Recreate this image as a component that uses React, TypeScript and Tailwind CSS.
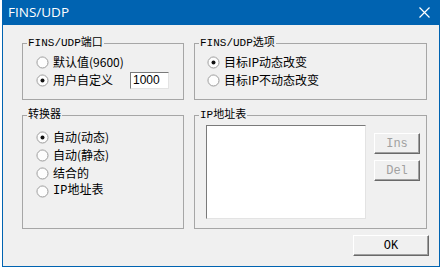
import type { ReactNode } from "react";

const cjk = "font-['Noto_Sans_CJK_SC',sans-serif]";
const mono = "font-['Liberation_Mono','Noto_Sans_CJK_SC',monospace]";

function Radio({ checked }: { checked?: boolean }) {
  return (
    <svg width="13" height="13" viewBox="0 0 13 13" className="shrink-0">
      <circle cx="6.5" cy="6.5" r="5.5" fill="#fdfdfd" stroke="#9a9a9a" />
      <path d="M2.6 9.8 A5 5 0 0 1 9.8 2.6" fill="none" stroke="#c8c8c8" />
      {checked ? <circle cx="6.5" cy="6.5" r="2" fill="#111" /> : null}
    </svg>
  );
}

function Option({ label, checked, className }: { label: ReactNode; checked?: boolean; className?: string }) {
  return (
    <div className="flex h-[18px] items-center gap-[4px]">
      <Radio checked={checked} />
      <span className={`text-[12px] leading-none text-black ${className ?? cjk}`}>{label}</span>
    </div>
  );
}

function Group({ title, className, children }: { title: string; className?: string; children: ReactNode }) {
  return (
    <div className={`relative border border-[#a6a6a6] ${className ?? ""}`}>
      <div className={`absolute left-[4px] top-[-8px] bg-[#f0f0f0] px-[1px] text-[11px] leading-[14px] text-black ${mono}`}>{title}</div>
      {children}
    </div>
  );
}

function Btn({ label, disabled, className }: { label: string; disabled?: boolean; className?: string }) {
  return (
    <div
      className={`flex items-center justify-center border border-t-white border-l-white border-b-[#696969] border-r-[#696969] bg-[#f0f0f0] text-[12px] leading-none shadow-[inset_-1px_-1px_0_#a0a0a0] ${mono} ${
        disabled ? "text-[#a0a0a0]" : "text-black"
      } ${className ?? ""}`}
    >
      {label}
    </div>
  );
}

export default function App() {
  return (
    <div className="h-[269px] w-[443px] overflow-hidden bg-white">
      <div className="ml-[2px] flex h-[267px] w-[438px] flex-col border border-t-0 border-[#0063b1] bg-[#f0f0f0]">
        <div className="flex h-[25px] items-center justify-between bg-[#0063b1] pl-[5px] pr-[9px]">
          <span className="font-['Open_Sans',sans-serif] text-[13.5px] text-white">FINS/UDP</span>
          <svg width="11" height="11" viewBox="0 0 11 11">
            <path d="M0.5 0.5 L10.5 10.5 M10.5 0.5 L0.5 10.5" stroke="white" strokeWidth="1.2" />
          </svg>
        </div>

        <div className="grid grid-cols-[162px_233px] gap-x-[10px] gap-y-[15px] pl-[19px] pt-[18px]">
          <Group title="FINS/UDP端口" className="h-[57px] pl-[13px] pt-[9px]">
            <Option label="默认值(9600)" />
            <div className="flex items-center">
              <Option label="用户自定义" checked />
              <div className="ml-[17px] flex h-[17px] w-[39px] items-center border border-t-[#7a7a7a] border-l-[#7a7a7a] border-b-[#e3e3e3] border-r-[#e3e3e3] bg-white pl-[2px] font-['Liberation_Sans',sans-serif] text-[12px] text-black">
                1000
              </div>
            </div>
          </Group>

          <Group title="FINS/UDP选项" className="h-[57px] pl-[12px] pt-[9px]">
            <Option label="目标IP动态改变" checked />
            <Option label="目标IP不动态改变" />
          </Group>

          <Group title="转换器" className="h-[114px] pl-[13px] pt-[12px]">
            <Option label="自动(动态)" checked />
            <Option label="自动(静态)" />
            <Option label="结合的" />
            <Option label="IP地址表" className={mono} />
          </Group>

          <Group title="IP地址表" className="flex h-[114px] gap-[8px] pl-[11px] pt-[9px]">
            <div className="h-[94px] w-[160px] border border-t-[#7a7a7a] border-l-[#7a7a7a] border-b-[#e3e3e3] border-r-[#e3e3e3] bg-white" />
            <div className="flex flex-col gap-[6px] pt-[8px]">
              <Btn label="Ins" disabled className="h-[21px] w-[46px]" />
              <Btn label="Del" disabled className="h-[21px] w-[46px]" />
            </div>
          </Group>
        </div>

        <div className="mt-auto flex justify-end pb-[10px] pr-[10px]">
          <Btn label="OK" className="h-[21px] w-[76px]" />
        </div>
      </div>
    </div>
  );
}
